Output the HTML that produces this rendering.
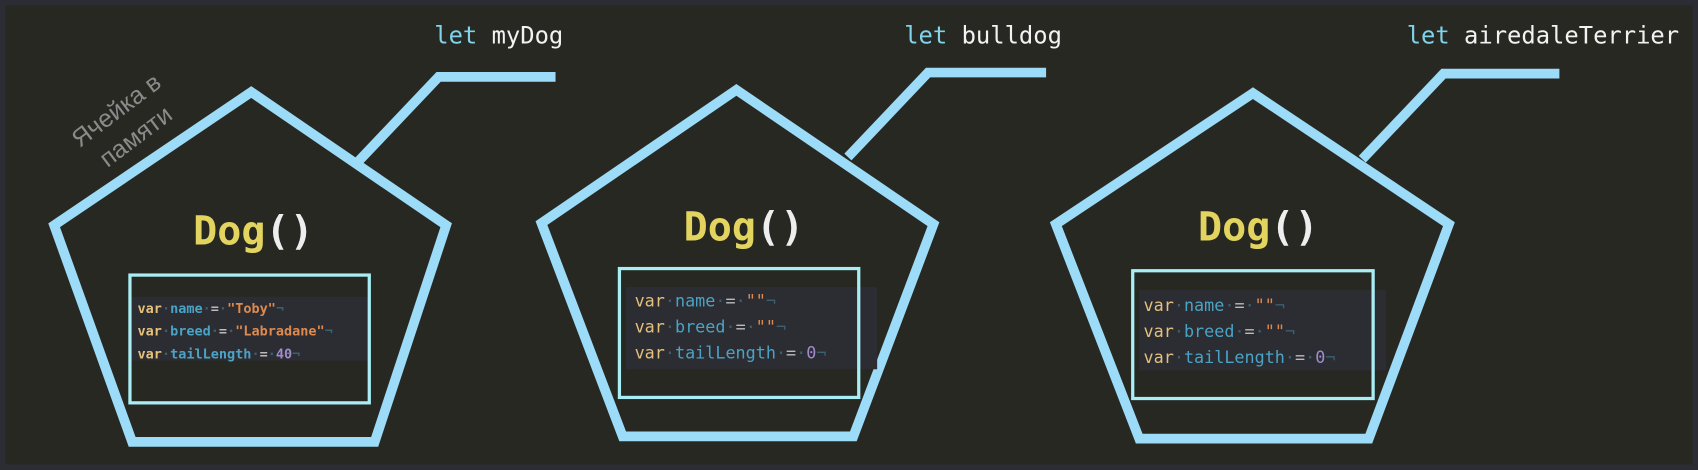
<!DOCTYPE html>
<html><head><meta charset="utf-8"><style>
html,body{margin:0;padding:0;background:#2b2c33;}
svg{display:block}
</style></head><body>
<svg width="1698" height="470" viewBox="0 0 1568 434" xmlns="http://www.w3.org/2000/svg">
<rect x="0" y="0" width="1568" height="434" fill="#2c2d34"/>
<rect x="5" y="5" width="1558" height="424" fill="#272822"/>
<g fill="none" stroke="#9cdcf8" stroke-width="9" stroke-linejoin="miter">
<polygon points="232,85 50,208 122,408 346,408 412,208"/>
<polyline points="330,150 405,71 513,71"/>
<polygon points="680,83 500,206 575,403 788,403 862,207"/>
<polyline points="783,145 857,67 966,67"/>
<polygon points="1157,86 975,207 1052,405 1264,405 1338,207"/>
<polyline points="1258,147 1333,68 1440,68"/>
</g>
<g font-family="DejaVu Sans Mono, monospace" font-size="22">
<text x="401" y="40"><tspan fill="#7fd3ea">let</tspan><tspan fill="#f2f2f2"> myDog</tspan></text>
<text x="835" y="40"><tspan fill="#7fd3ea">let</tspan><tspan fill="#f2f2f2"> bulldog</tspan></text>
<text x="1299" y="40"><tspan fill="#7fd3ea">let</tspan><tspan fill="#f2f2f2"> airedaleTerrier</tspan></text>
</g>
<text x="112" y="108" transform="rotate(-37 112 108)" font-family="Liberation Sans, sans-serif" font-size="23" fill="#8a8a8a" text-anchor="middle">Ячейка в</text>
<text x="130" y="132" transform="rotate(-37 130 132)" font-family="Liberation Sans, sans-serif" font-size="23" fill="#8a8a8a" text-anchor="middle">памяти</text>
<g font-family="DejaVu Sans Mono, monospace" font-size="37" font-weight="bold" text-anchor="middle">
<text x="234" y="226"><tspan fill="#e2d45e">Dog</tspan><tspan fill="#eeeeee">()</tspan></text>
<text x="687" y="222"><tspan fill="#e2d45e">Dog</tspan><tspan fill="#eeeeee">()</tspan></text>
<text x="1162" y="222"><tspan fill="#e2d45e">Dog</tspan><tspan fill="#eeeeee">()</tspan></text>
</g>
<rect x="120" y="274" width="222" height="59" fill="#2c2d33"/>
<rect x="578" y="265" width="232" height="76" fill="#2c2d33"/>
<rect x="1052" y="268" width="228" height="74" fill="#2c2d33"/>
<g fill="none" stroke="#a8eef4" stroke-width="3">
<rect x="120" y="254" width="221" height="118"/>
<rect x="572" y="248" width="221" height="119"/>
<rect x="1046" y="250" width="222" height="118"/>
</g>
<g font-family="DejaVu Sans Mono, monospace" font-size="12.5" font-weight="bold">
<text x="127" y="289"><tspan fill="#e5c07b">var</tspan><tspan fill="#3b6070">·</tspan><tspan fill="#4aa3c4">name</tspan><tspan fill="#3b6070">·</tspan><tspan fill="#bbb">=</tspan><tspan fill="#3b6070">·</tspan><tspan fill="#de8a4e">"Toby"</tspan><tspan fill="#3b6070">¬</tspan></text>
<text x="127" y="310"><tspan fill="#e5c07b">var</tspan><tspan fill="#3b6070">·</tspan><tspan fill="#4aa3c4">breed</tspan><tspan fill="#3b6070">·</tspan><tspan fill="#bbb">=</tspan><tspan fill="#3b6070">·</tspan><tspan fill="#de8a4e">"Labradane"</tspan><tspan fill="#3b6070">¬</tspan></text>
<text x="127" y="331"><tspan fill="#e5c07b">var</tspan><tspan fill="#3b6070">·</tspan><tspan fill="#4aa3c4">tailLength</tspan><tspan fill="#3b6070">·</tspan><tspan fill="#bbb">=</tspan><tspan fill="#3b6070">·</tspan><tspan fill="#a08ccc">40</tspan><tspan fill="#3b6070">¬</tspan></text>
</g>
<g font-family="DejaVu Sans Mono, monospace" font-size="15.5">
<text x="586" y="283"><tspan fill="#e5c07b">var</tspan><tspan fill="#3b6070">·</tspan><tspan fill="#4aa3c4">name</tspan><tspan fill="#3b6070">·</tspan><tspan fill="#bbb">=</tspan><tspan fill="#3b6070">·</tspan><tspan fill="#de8a4e">""</tspan><tspan fill="#3b6070">¬</tspan></text>
<text x="586" y="307"><tspan fill="#e5c07b">var</tspan><tspan fill="#3b6070">·</tspan><tspan fill="#4aa3c4">breed</tspan><tspan fill="#3b6070">·</tspan><tspan fill="#bbb">=</tspan><tspan fill="#3b6070">·</tspan><tspan fill="#de8a4e">""</tspan><tspan fill="#3b6070">¬</tspan></text>
<text x="586" y="331"><tspan fill="#e5c07b">var</tspan><tspan fill="#3b6070">·</tspan><tspan fill="#4aa3c4">tailLength</tspan><tspan fill="#3b6070">·</tspan><tspan fill="#bbb">=</tspan><tspan fill="#3b6070">·</tspan><tspan fill="#a08ccc">0</tspan><tspan fill="#3b6070">¬</tspan></text>
<text x="1056" y="287"><tspan fill="#e5c07b">var</tspan><tspan fill="#3b6070">·</tspan><tspan fill="#4aa3c4">name</tspan><tspan fill="#3b6070">·</tspan><tspan fill="#bbb">=</tspan><tspan fill="#3b6070">·</tspan><tspan fill="#de8a4e">""</tspan><tspan fill="#3b6070">¬</tspan></text>
<text x="1056" y="311"><tspan fill="#e5c07b">var</tspan><tspan fill="#3b6070">·</tspan><tspan fill="#4aa3c4">breed</tspan><tspan fill="#3b6070">·</tspan><tspan fill="#bbb">=</tspan><tspan fill="#3b6070">·</tspan><tspan fill="#de8a4e">""</tspan><tspan fill="#3b6070">¬</tspan></text>
<text x="1056" y="335"><tspan fill="#e5c07b">var</tspan><tspan fill="#3b6070">·</tspan><tspan fill="#4aa3c4">tailLength</tspan><tspan fill="#3b6070">·</tspan><tspan fill="#bbb">=</tspan><tspan fill="#3b6070">·</tspan><tspan fill="#a08ccc">0</tspan><tspan fill="#3b6070">¬</tspan></text>
</g>
</svg>
</body></html>
